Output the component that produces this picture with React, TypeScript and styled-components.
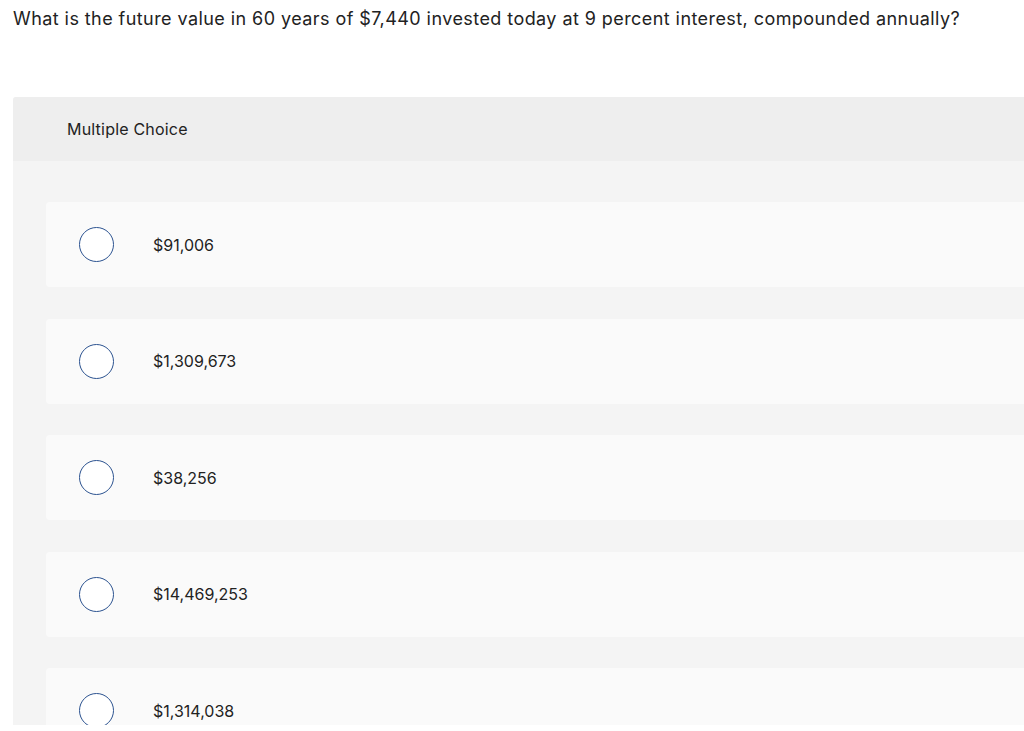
import React from 'react';
import styled, { createGlobalStyle } from 'styled-components';

const GlobalStyle = createGlobalStyle`
  html, body {
    margin: 0;
    padding: 0;
    background: #ffffff;
    overflow: hidden;
  }
  body {
    font-family: Inter, "Open Sans", "Liberation Sans", sans-serif;
    color: #222222;
  }
`;

const Page = styled.div`
  width: 1024px;
  height: 731px;
  padding-left: 13px;
  box-sizing: border-box;
`;

const Question = styled.p`
  margin: 0;
  padding-top: 7px;
  height: 97px;
  box-sizing: border-box;
  font-size: 18px;
  line-height: 24px;
  letter-spacing: 0.43px;
  color: #222222;
`;

const Panel = styled.section`
  height: 628px;
  overflow: hidden;
  background: #f4f4f4;
  border-top-left-radius: 3px;
`;

const PanelHeader = styled.div`
  height: 64px;
  background: #eeeeee;
  display: flex;
  align-items: center;
  padding-left: 54px;
  font-size: 16px;
  letter-spacing: 0.2px;
  color: #222222;
`;

const OptionList = styled.div`
  display: flex;
  flex-direction: column;
  gap: 31.5px;
  padding: 41px 0 0 33px;
`;

const OptionCard = styled.label`
  display: flex;
  align-items: center;
  flex-shrink: 0;
  height: 85px;
  background: #fafafa;
  border-radius: 4px 0 0 4px;
  padding-left: 33px;
  cursor: pointer;
`;

const Radio = styled.span`
  width: 35px;
  height: 35px;
  box-sizing: border-box;
  border-radius: 50%;
  border: 1.5px solid #2c5390;
  background: #ffffff;
  flex-shrink: 0;
`;

const OptionText = styled.span`
  margin-left: 39px;
  font-size: 16px;
  color: #222222;
`;

const options = ['$91,006', '$1,309,673', '$38,256', '$14,469,253', '$1,314,038'];

const App: React.FC = () => {
  return (
    <>
      <GlobalStyle />
      <Page>
        <Question>
          What is the future value in 60 years of $7,440 invested today at 9 percent interest, compounded annually?
        </Question>
        <Panel>
          <PanelHeader>Multiple Choice</PanelHeader>
          <OptionList>
            {options.map((opt) => (
              <OptionCard key={opt}>
                <Radio />
                <OptionText>{opt}</OptionText>
              </OptionCard>
            ))}
          </OptionList>
        </Panel>
      </Page>
    </>
  );
};

export default App;
